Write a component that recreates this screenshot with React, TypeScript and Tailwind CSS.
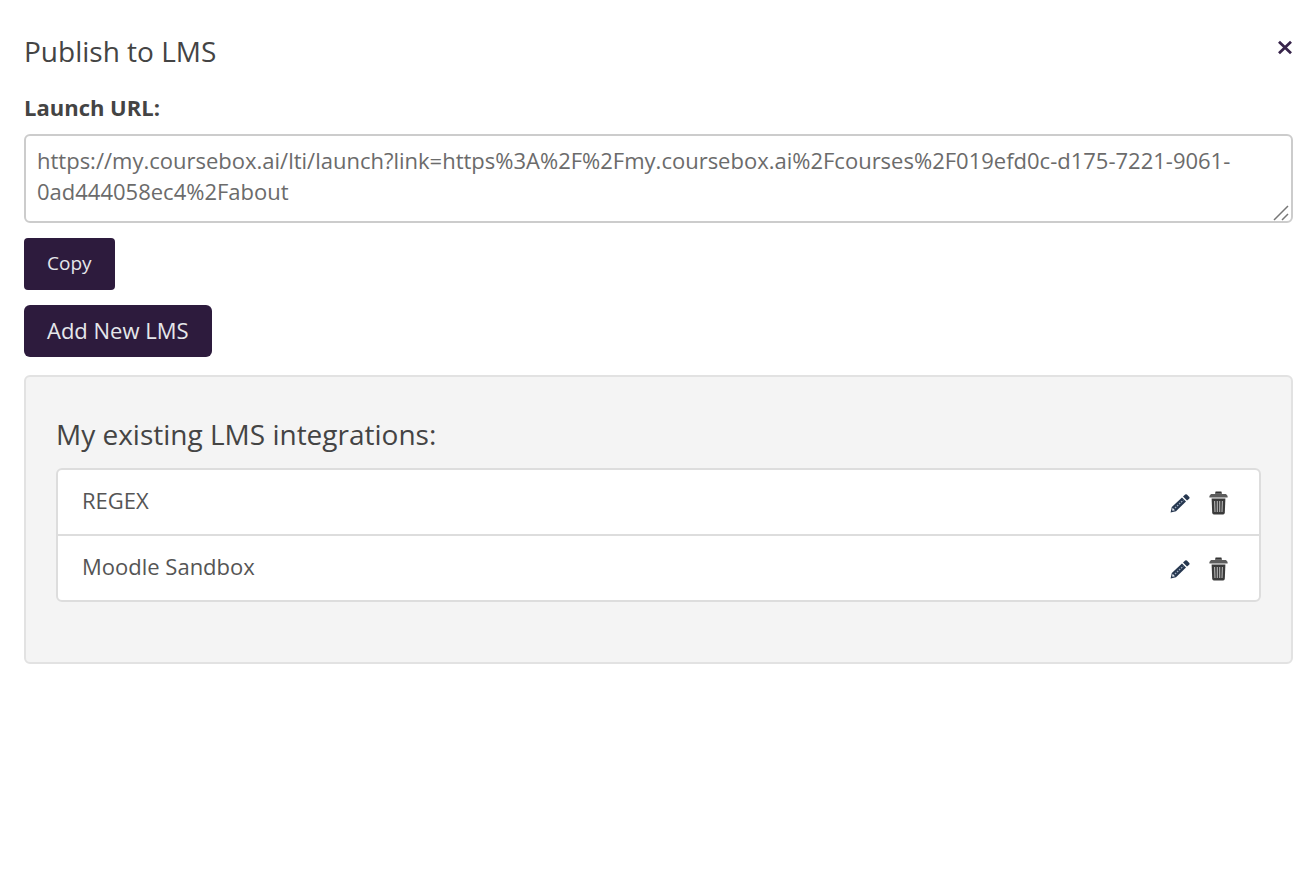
import { useState } from 'react'

type Integration = {
  id: number
  name: string
}

const LAUNCH_URL =
  'https://my.coursebox.ai/lti/launch?link=https%3A%2F%2Fmy.coursebox.ai%2Fcourses%2F019efd0c-d175-7221-9061-0ad444058ec4%2Fabout'

function CloseIcon() {
  return (
    <svg className="size-4" viewBox="0 0 16 16" fill="none" stroke="currentColor" strokeWidth="2.8" aria-hidden="true">
      <path d="M2 1.8 14 13.2M14 1.8 2 13.2" />
    </svg>
  )
}

function PencilIcon() {
  return (
    <svg className="size-5" viewBox="0 0 20 20" aria-hidden="true">
      <path fill="#26374f" d="M0.6 19.4 1.8 14 12 4.4 16 8.4 6 18.2Z" />
      <path fill="#26374f" d="M13 3.6 15.2 1.6Q16 0.9 16.9 1.6L19.3 4Q20 4.9 19.2 5.7L17 7.5Z" />
      <path stroke="#a3b0c4" strokeWidth="1.3" strokeDasharray="1.6 1.2" d="M5 15 13.4 7" />
      <path fill="#e6eaf1" d="M2.6 14.8 5 17.2 2.7 17.8 2.1 17.2Z" />
    </svg>
  )
}

function TrashIcon() {
  return (
    <svg className="h-6 w-5" viewBox="0 0 20 24" aria-hidden="true">
      <path fill="#333" d="M6.6 0.6H12.4L13 2.8H6Z" />
      <path fill="#5c5c5c" d="M2 3H17L18.6 5V6.6H0.4V5Z" />
      <path fill="#3a3a3a" d="M2.6 7.4H16.4L15.8 21.8Q15.6 23.6 14.2 23.6H4.8Q3.4 23.6 3.2 21.8Z" />
      <path stroke="#b5b5b5" strokeWidth="1.1" fill="none" d="M5.6 10 6 21M8.3 10V21M10.7 10V21M13.4 10 13 21" />
    </svg>
  )
}

export default function App() {
  const [url, setUrl] = useState(LAUNCH_URL)
  const [integrations, setIntegrations] = useState<Integration[]>([
    { id: 1, name: 'REGEX' },
    { id: 2, name: 'Moodle Sandbox' },
  ])

  const copyUrl = () => {
    navigator.clipboard?.writeText(url)
  }

  const removeIntegration = (id: number) => {
    setIntegrations(integrations.filter((item) => item.id !== id))
  }

  return (
    <main className="min-h-screen bg-white pt-8 pr-[21px] pl-6 font-['Open_Sans',sans-serif] text-[#444]">
      <div className="flex items-start justify-between">
        <h1 className="text-[28px] leading-[38px]">Publish to LMS</h1>
        <button type="button" aria-label="Close" className="mt-2 cursor-pointer text-[#37244a]">
          <CloseIcon />
        </button>
      </div>

      <label htmlFor="launch-url" className="mt-[22px] block text-[22px] leading-[30px] font-bold">
        Launch URL:
      </label>
      <div className="relative mt-3">
        <textarea
          id="launch-url"
          rows={2}
          value={url}
          onChange={(e) => setUrl(e.target.value)}
          className="block w-full resize-y rounded-md border-2 border-[#ccc] px-[11px] pt-[9px] pb-3.5 text-[22px] leading-[31px] text-[#6b6b6b] [&::-webkit-resizer]:bg-transparent"
        />
        {/* resize grip */}
        <svg className="pointer-events-none absolute right-1 bottom-0.5 size-4" viewBox="0 0 16 16" stroke="#777" strokeWidth="1.5" aria-hidden="true">
          <path d="M1 15 15 1M9 15 15 9" />
        </svg>
      </div>

      <div className="mt-[15px] flex flex-col items-start gap-[15px]">
        <button type="button" onClick={copyUrl} className="cursor-pointer rounded bg-[#2d1b3d] px-[23px] pt-[11px] pb-[13px] text-[19px] leading-7 text-gray-200">
          Copy
        </button>
        <button type="button" className="cursor-pointer rounded-md bg-[#2d1b3d] px-[23px] pt-[11px] pb-[13px] text-[22px] leading-7 text-gray-200">
          Add New LMS
        </button>
      </div>

      <section className="mt-[18px] rounded-md border-2 border-[#e2e2e2] bg-[#f4f4f4] px-[30px] pt-[38px] pb-[60px]">
        <h2 className="text-[28px] leading-[38px]">My existing LMS integrations:</h2>
        <ul className="mt-[15px] divide-y-2 divide-[#ddd] rounded-md border-2 border-[#ddd] bg-white">
          {integrations.map((item) => (
            <li key={item.id} className="flex items-center justify-between pt-3.5 pr-[30px] pb-[18px] pl-6 text-[22px] leading-8 text-[#555]">
              <span>{item.name}</span>
              <div className="flex items-center gap-[19px] pt-1.5">
                <button type="button" aria-label={`Edit ${item.name}`} className="cursor-pointer">
                  <PencilIcon />
                </button>
                <button
                  type="button"
                  aria-label={`Delete ${item.name}`}
                  onClick={() => removeIntegration(item.id)}
                  className="cursor-pointer"
                >
                  <TrashIcon />
                </button>
              </div>
            </li>
          ))}
        </ul>
      </section>
    </main>
  )
}
